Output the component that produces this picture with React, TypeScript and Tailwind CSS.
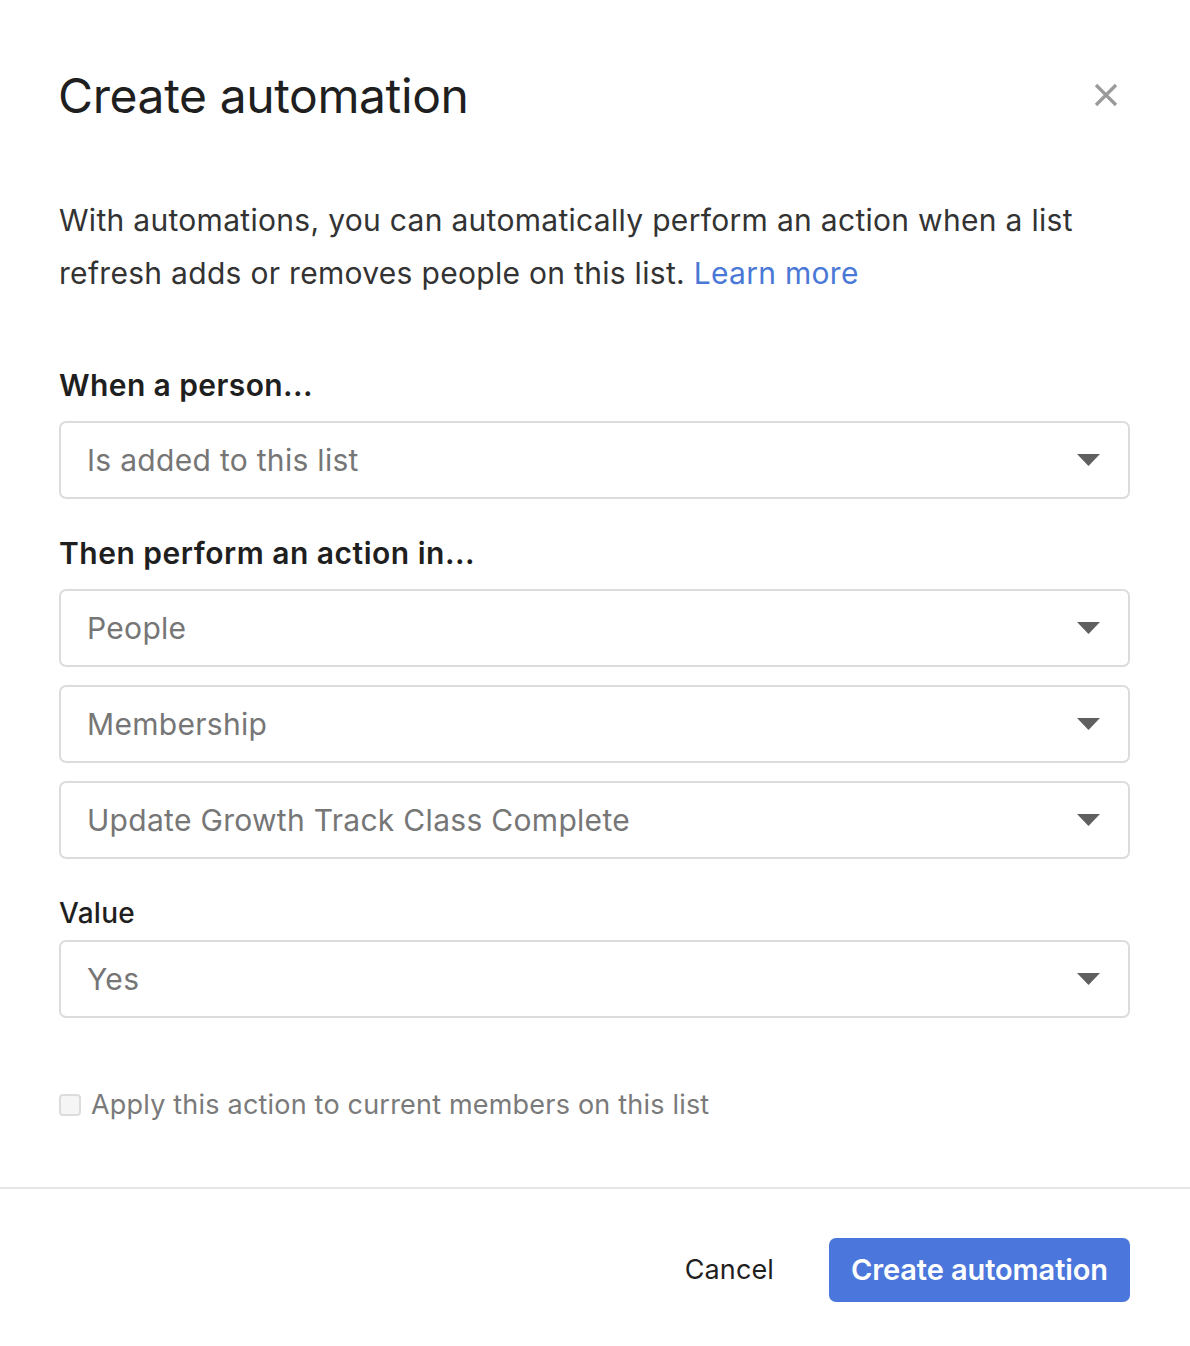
const Caret = () => (
    <svg width="23" height="12" viewBox="0 0 23 12" className="shrink-0">
        <path d="M0 0 H23 L11.5 12 Z" fill="#5f5f5f" />
    </svg>
);

const CloseIcon = () => (
    <svg width="24" height="24" viewBox="0 0 24 24">
        <path d="M2 2 L22 22 M22 2 L2 22" stroke="#9a9a9a" strokeWidth="3.2" strokeLinecap="butt" />
    </svg>
);

const SelectBox = ({ value, className = '' }: { value: string; className?: string }) => (
    <div
        className={`flex h-[78px] items-center justify-between rounded-[7px] border-2 border-[#dcdcdc] bg-white pl-[26px] pr-[28px] ${className}`}
    >
        <span className="text-[30px] tracking-[0.3px] text-[#767676]">{value}</span>
        <Caret />
    </div>
);

const App = () => {
    return (
        <div
            className="min-h-[1346px] w-full bg-white"
            style={{ fontFamily: 'Inter, "Noto Sans", sans-serif' }}
        >
            {/* header */}
            <div className="flex items-center justify-between pl-[58px] pr-[72px] pt-[67px]">
                <h1 className="text-[48px] leading-[58px] font-normal tracking-[-0.4px] text-[#1f1f1f]">
                    Create automation
                </h1>
                <button className="mt-[-2px]">
                    <CloseIcon />
                </button>
            </div>

            <div className="pl-[59px] pr-[60px]">
                <p className="mt-[69px] text-[30px] leading-[53px] tracking-[0.3px] text-[#333333]">
                    With automations, you can automatically perform an action when a list refresh adds or
                    removes people on this list. <span className="text-[#4a78d6]">Learn more</span>
                </p>

                <h2 className="mt-[65px] text-[30px] leading-[40px] font-semibold tracking-[0.4px] text-[#1f1f1f]">
                    When a person...
                </h2>
                <SelectBox value="Is added to this list" className="mt-[16px]" />

                <h2 className="mt-[34px] text-[30px] leading-[40px] font-semibold tracking-[0.5px] text-[#1f1f1f]">
                    Then perform an action in...
                </h2>
                <div className="mt-[16px] flex flex-col gap-[18px]">
                    <SelectBox value="People" />
                    <SelectBox value="Membership" />
                    <SelectBox value="Update Growth Track Class Complete" />
                </div>

                <h3 className="mt-[34px] text-[28px] leading-[40px] font-medium tracking-[0.3px] text-[#1f1f1f]">
                    Value
                </h3>
                <SelectBox value="Yes" className="mt-[7px]" />

                <label className="mt-[69px] flex items-center gap-[10px]">
                    <span className="h-[22px] w-[22px] rounded-[4px] border-2 border-[#dcdcdc] bg-[#f5f5f5]" />
                    <span className="text-[27px] leading-[36px] tracking-[0.2px] text-[#7a7a7a]">
                        Apply this action to current members on this list
                    </span>
                </label>
            </div>

            <div className="mt-[64px] border-t-2 border-[#e6e6e6]" />

            <div className="flex items-center justify-end gap-[55px] pr-[60px] pt-[49px]">
                <button className="text-[27px] tracking-[0.1px] text-[#1f1f1f]">Cancel</button>
                <button className="h-[64px] rounded-[7px] bg-[#4b77dc] px-[22px] text-[29px] font-semibold tracking-[-0.1px] text-white">
                    Create automation
                </button>
            </div>
        </div>
    );
};

export default App;
